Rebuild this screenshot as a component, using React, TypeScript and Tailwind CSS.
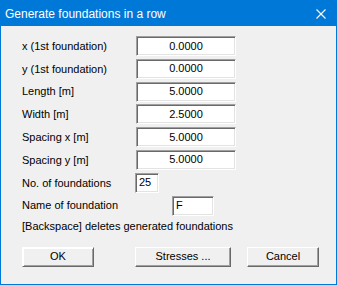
const rows = [
  { label: 'x (1st foundation)', value: '0.0000' },
  { label: 'y (1st foundation)', value: '0.0000' },
  { label: 'Length [m]', value: '5.0000' },
  { label: 'Width [m]', value: '2.5000' },
  { label: 'Spacing x [m]', value: '5.0000' },
  { label: 'Spacing y [m]', value: '5.0000' },
]

// classic sunken edit box
const field =
  'h-[20px] bg-white border border-t-[#a0a0a0] border-l-[#a0a0a0] border-r-white border-b-white shadow-[inset_1px_1px_0_#696969,inset_-1px_-1px_0_#e3e3e3] flex items-center leading-none'

// classic raised push button
const button =
  'h-[20px] bg-[#f0f0f0] border border-t-white border-l-white border-r-[#696969] border-b-[#696969] shadow-[inset_-1px_-1px_0_#a0a0a0] flex items-center justify-center'

export default function App() {
  return (
    <div className="w-[337px] h-[285px] border border-[#0078d7] bg-[#f0f0f0] flex flex-col text-[11px] text-black font-['Liberation_Sans',Arial,sans-serif]">
      {/* title bar */}
      <div className="h-[25px] shrink-0 bg-[#0078d7] flex items-center justify-between pl-[4px] pr-[10px]">
        <span className="text-white text-[12px]">Generate foundations in a row</span>
        <svg width="10" height="10" viewBox="0 0 10 10" className="block">
          <path d="M0.5 0.5 L9.5 9.5 M9.5 0.5 L0.5 9.5" stroke="white" strokeWidth="1.1" fill="none" />
        </svg>
      </div>

      {/* body */}
      <div className="flex flex-col pl-[21px] pt-[10px]">
        <div className="flex flex-col gap-[2.8px]">
          {rows.map((r) => (
            <div key={r.label} className="flex items-center h-[20px]">
              <span className="w-[114px]">{r.label}</span>
              <div className={`${field} w-[100px] justify-center`}>{r.value}</div>
            </div>
          ))}
          <div className="flex items-center h-[20px]">
            <span className="w-[113px]">No. of foundations</span>
            <div className={`${field} w-[24px] pl-[3px]`}>25</div>
          </div>
          <div className="flex items-center h-[20px]">
            <span className="w-[150px]">Name of foundation</span>
            <div className={`${field} w-[42px] pl-[3px]`}>F</div>
          </div>
        </div>

        <p className="mt-[4px] leading-[13px]">[Backspace] deletes generated foundations</p>

        <div className="flex mt-[14px]">
          <div className={`${button} w-[72px] border-[#646464] shadow-[inset_1px_1px_0_white,inset_-1px_-1px_0_#a0a0a0]`}>OK</div>
          <div className={`${button} w-[96px] ml-[41px]`}>Stresses ...</div>
          <div className={`${button} w-[72px] ml-[16px]`}>Cancel</div>
        </div>
      </div>
    </div>
  )
}
